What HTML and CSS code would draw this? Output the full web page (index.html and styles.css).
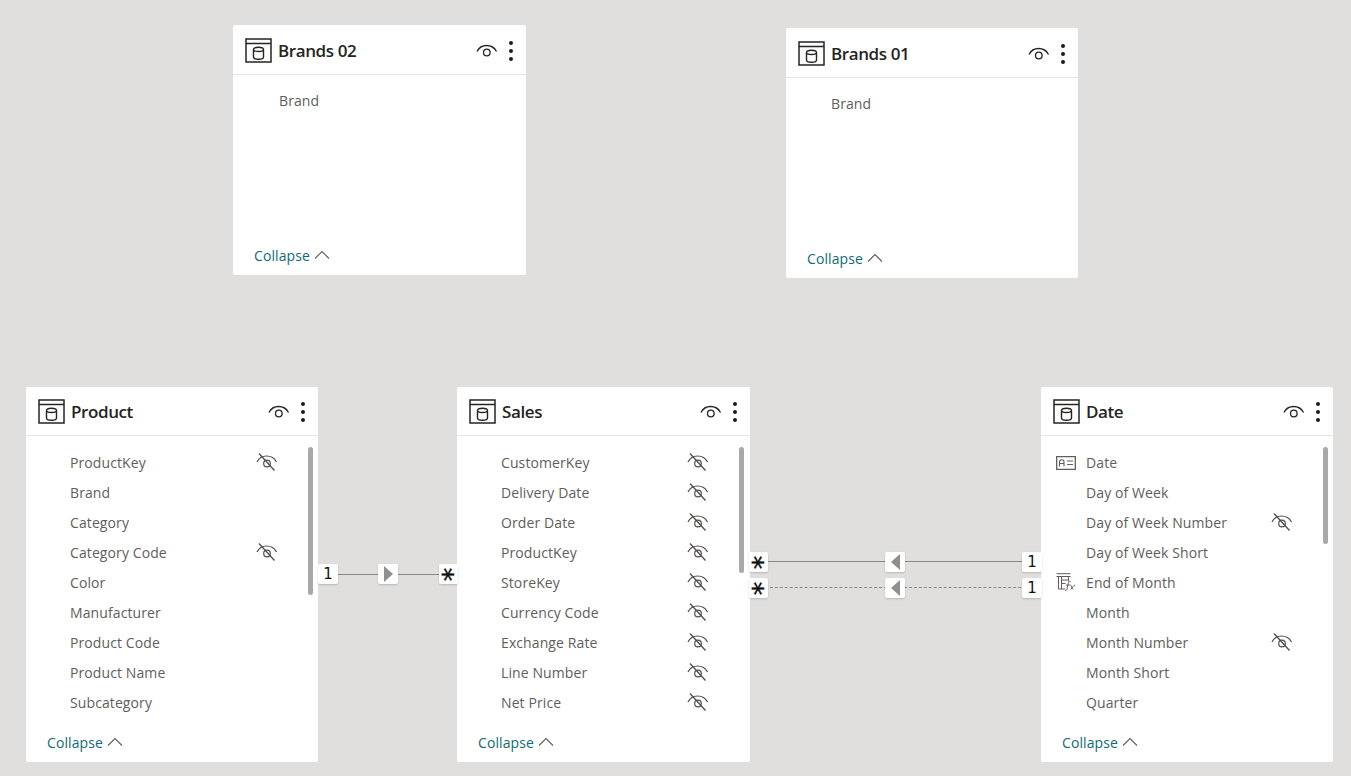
FILE: index.html
```html
<!DOCTYPE html>
<html lang="en">
<head>
<meta charset="utf-8">
<title>Model view</title>
<link rel="stylesheet" href="styles.css">
</head>
<body>
<svg class="defs" width="0" height="0" aria-hidden="true">
  <symbol id="tbl" viewBox="0 0 27 25">
    <path d="M1 1h25v23H1zM1 5.500h25" fill="none" stroke="#252423" stroke-width="1.500"/>
    <path d="M8.500 11.500c0-3 10-3 10 0v7.500c0 3-10 3-10 0zM8.500 11.500c0 2.600 10 2.600 10 0" fill="none" stroke="#252423" stroke-width="1.400"/>
  </symbol>
  <symbol id="eye" viewBox="0 0 22 14">
    <path d="M1 7.500C3 3.500 6.500 1.500 10.500 1.500S18.500 3.500 20.500 7.500" fill="none" stroke="#252423" stroke-width="1.300"/>
    <circle cx="10.800" cy="8.500" r="3.300" fill="none" stroke="#252423" stroke-width="1.300"/>
  </symbol>
  <symbol id="off" viewBox="0 0 22 20">
    <path d="M1 10C3 6 6.500 4 10.500 4S18.500 6 20.500 10" fill="none" stroke="#504e4c" stroke-width="1.200"/>
    <circle cx="11" cy="11.500" r="3.300" fill="none" stroke="#504e4c" stroke-width="1.200"/>
    <path d="M3 1.500 18.500 18.500" stroke="#504e4c" stroke-width="1.300"/>
  </symbol>
  <symbol id="idcard" viewBox="0 0 20 14">
    <path d="M.700.700h18.600v12.600H.700z" fill="none" stroke="#605e5c" stroke-width="1.300"/>
    <path d="M3.500 10.500V6c0-3 4.500-3 4.500 0v4.500M3.500 7.500H8M11 5h6M11 8.500h6" fill="none" stroke="#605e5c" stroke-width="1.100"/>
  </symbol>
  <symbol id="fx" viewBox="0 0 20 18">
    <path d="M.500.700h14M.500 3.500h14M2.500 3.500v12.500h6.500M5.500 3.500v12.500M12.500 3.500v5M5.500 7h7M5.500 10.500h4" fill="none" stroke="#605e5c"/>
    <path d="M9 17.500c2.200 0 2.200-1.500 2.700-5s1.500-4 3-4M10.200 12h4M14.500 12c1.200 0 1.200 4 2.800 4.500M19 12c-1 0-2.800 2.500-4.300 4.500" fill="none" stroke="#605e5c" stroke-width="1"/>
  </symbol>
</svg>

<main class="canvas">
  <section class="card card-brands2 card-short">
    <header class="card-head"><svg class="tbl-icon"><use href="#tbl"/></svg><h2 class="card-title">Brands 02</h2><svg class="eye-icon"><use href="#eye"/></svg><span class="kebab"><i></i><i></i><i></i></span></header>
    <ul class="fields"><li class="field">Brand</li></ul>
    <footer class="card-foot">Collapse <svg class="chev" viewBox="0 0 16 9"><path d="M1 8.500 8 1.500l7 7" /></svg></footer>
  </section>

  <section class="card card-brands1 card-short">
    <header class="card-head"><svg class="tbl-icon"><use href="#tbl"/></svg><h2 class="card-title">Brands 01</h2><svg class="eye-icon"><use href="#eye"/></svg><span class="kebab"><i></i><i></i><i></i></span></header>
    <ul class="fields"><li class="field">Brand</li></ul>
    <footer class="card-foot">Collapse <svg class="chev" viewBox="0 0 16 9"><path d="M1 8.500 8 1.500l7 7" /></svg></footer>
  </section>

  <section class="card card-product">
    <header class="card-head"><svg class="tbl-icon"><use href="#tbl"/></svg><h2 class="card-title">Product</h2><svg class="eye-icon"><use href="#eye"/></svg><span class="kebab"><i></i><i></i><i></i></span></header>
    <ul class="fields">
      <li class="field"><span class="name">ProductKey</span><svg class="off-icon"><use href="#off"/></svg></li>
      <li class="field"><span class="name">Brand</span></li>
      <li class="field"><span class="name">Category</span></li>
      <li class="field"><span class="name">Category Code</span><svg class="off-icon"><use href="#off"/></svg></li>
      <li class="field"><span class="name">Color</span></li>
      <li class="field"><span class="name">Manufacturer</span></li>
      <li class="field"><span class="name">Product Code</span></li>
      <li class="field"><span class="name">Product Name</span></li>
      <li class="field"><span class="name">Subcategory</span></li>
    </ul>
    <span class="thumb thumb-product"></span>
    <footer class="card-foot">Collapse <svg class="chev" viewBox="0 0 16 9"><path d="M1 8.500 8 1.500l7 7" /></svg></footer>
  </section>

  <section class="card card-sales">
    <header class="card-head"><svg class="tbl-icon"><use href="#tbl"/></svg><h2 class="card-title">Sales</h2><svg class="eye-icon"><use href="#eye"/></svg><span class="kebab"><i></i><i></i><i></i></span></header>
    <ul class="fields">
      <li class="field"><span class="name">CustomerKey</span><svg class="off-icon"><use href="#off"/></svg></li>
      <li class="field"><span class="name">Delivery Date</span><svg class="off-icon"><use href="#off"/></svg></li>
      <li class="field"><span class="name">Order Date</span><svg class="off-icon"><use href="#off"/></svg></li>
      <li class="field"><span class="name">ProductKey</span><svg class="off-icon"><use href="#off"/></svg></li>
      <li class="field"><span class="name">StoreKey</span><svg class="off-icon"><use href="#off"/></svg></li>
      <li class="field"><span class="name">Currency Code</span><svg class="off-icon"><use href="#off"/></svg></li>
      <li class="field"><span class="name">Exchange Rate</span><svg class="off-icon"><use href="#off"/></svg></li>
      <li class="field"><span class="name">Line Number</span><svg class="off-icon"><use href="#off"/></svg></li>
      <li class="field"><span class="name">Net Price</span><svg class="off-icon"><use href="#off"/></svg></li>
    </ul>
    <span class="thumb thumb-sales"></span>
    <footer class="card-foot">Collapse <svg class="chev" viewBox="0 0 16 9"><path d="M1 8.500 8 1.500l7 7" /></svg></footer>
  </section>

  <section class="card card-date">
    <header class="card-head"><svg class="tbl-icon"><use href="#tbl"/></svg><h2 class="card-title">Date</h2><svg class="eye-icon"><use href="#eye"/></svg><span class="kebab"><i></i><i></i><i></i></span></header>
    <ul class="fields">
      <li class="field"><svg class="type-icon"><use href="#idcard"/></svg><span class="name">Date</span></li>
      <li class="field"><span class="name">Day of Week</span></li>
      <li class="field"><span class="name">Day of Week Number</span><svg class="off-icon"><use href="#off"/></svg></li>
      <li class="field"><span class="name">Day of Week Short</span></li>
      <li class="field"><svg class="type-icon type-fx"><use href="#fx"/></svg><span class="name">End of Month</span></li>
      <li class="field"><span class="name">Month</span></li>
      <li class="field"><span class="name">Month Number</span><svg class="off-icon"><use href="#off"/></svg></li>
      <li class="field"><span class="name">Month Short</span></li>
      <li class="field"><span class="name">Quarter</span></li>
    </ul>
    <span class="thumb thumb-date"></span>
    <footer class="card-foot">Collapse <svg class="chev" viewBox="0 0 16 9"><path d="M1 8.500 8 1.500l7 7" /></svg></footer>
  </section>

  <div class="link link-a"></div>
  <div class="link link-b"></div>
  <div class="link link-c"></div>

  <span class="tag tag-one t1">1</span>
  <span class="tag tag-arrow t2"><i class="tri tri-right"></i></span>
  <span class="tag tag-star t3"><span class="star">*</span></span>
  <span class="tag tag-star t4"><span class="star">*</span></span>
  <span class="tag tag-arrow t5"><i class="tri tri-left"></i></span>
  <span class="tag tag-one t6">1</span>
  <span class="tag tag-star t7"><span class="star">*</span></span>
  <span class="tag tag-arrow t8"><i class="tri tri-left"></i></span>
  <span class="tag tag-one t9">1</span>
</main>
</body>
</html>
```

FILE: styles.css
```css
* { box-sizing: border-box; }
html, body { margin: 0; padding: 0; height: 100%; }
body {
  background: #e0dfdd;
  font-family: "Open Sans", "Noto Sans", sans-serif;
  overflow: hidden;
}
.defs { position: absolute; }
.canvas { position: relative; width: 1351px; height: 776px; overflow: hidden; }

.card {
  position: absolute;
  display: flex;
  flex-direction: column;
  background: #fff;
  border-radius: 2px;
  width: 292px;
  height: 375px;
}
.card-short { height: 250px; }
.card-brands2 { left: 233px; top: 25px; width: 293px; }
.card-brands1 { left: 786px; top: 28px; }
.card-product { left: 26px; top: 387px; }
.card-sales { left: 457px; top: 387px; width: 293px; }
.card-date { left: 1041px; top: 387px; }

.card-head {
  display: flex;
  align-items: center;
  height: 49px;
  padding: 1px 13px 0 12px;
  border-bottom: 1px solid #e6e5e4;
  flex: none;
}
.card-short .card-head { height: 50px; padding-top: 2px; }
.tbl-icon { width: 27px; height: 25px; flex: none; }
.card-title {
  flex: 1;
  margin: 0 0 0 6px;
  font-size: 17px;
  font-weight: 600;
  color: #252423;
  letter-spacing: -.4px;
}
.eye-icon { width: 22px; height: 14px; margin-top: 1px; flex: none; }
.kebab {
  display: flex;
  flex-direction: column;
  gap: 4px;
  width: 4px;
  margin-left: 11px;
  flex: none;
}
.kebab i { width: 4px; height: 4px; border-radius: 50%; background: #1b1a19; }

.fields {
  list-style: none;
  margin: 0;
  padding: 11px 0 0;
  flex: 1;
}
.card-short .fields { padding-top: 10px; }
.field {
  position: relative;
  height: 30px;
  display: flex;
  align-items: center;
  padding-left: 44px;
  font-size: 14px;
  letter-spacing: .1px;
  color: #605e5c;
}
.card-short .field, .card-date .field { padding-left: 45px; }
.card-brands2 .field { padding-left: 46px; }
.name { flex: none; }
.off-icon {
  position: absolute;
  left: 230px;
  top: 5px;
  width: 22px;
  height: 20px;
}
.type-icon {
  position: absolute;
  left: 15px;
  top: 9px;
  width: 20px;
  height: 14px;
}
.type-fx { height: 18px; top: 6px; }

.thumb {
  position: absolute;
  top: 60px;
  width: 5px;
  border-radius: 3px;
  background: #a9a9a9;
}
.thumb-product { left: 282px; height: 148px; }
.thumb-sales { left: 282px; height: 126px; }
.thumb-date { left: 282px; height: 97px; }

.card-foot {
  display: flex;
  align-items: center;
  gap: 4px;
  height: 40px;
  padding: 0 0 0 21px;
  font-size: 14px;
  letter-spacing: .1px;
  color: #0f6b78;
  flex: none;
}
.chev { width: 16px; height: 9px; margin-top: -2px; }
.chev path { fill: none; stroke: #605e5c; stroke-width: 1.1; }

.link { position: absolute; height: 0; border-top: 1px solid #8a8886; }
.link-a { left: 318px; width: 139px; top: 574px; }
.link-b { left: 750px; width: 291px; top: 561px; border-top-width: 1.5px; }
.link-c { left: 750px; width: 291px; top: 587px; border-top: 1px dashed #8a8886; }

.tag {
  position: absolute;
  display: flex;
  align-items: center;
  justify-content: center;
  height: 20px;
  background: #fff;
  border-radius: 2px;
  box-shadow: 0 1px 2px rgba(0, 0, 0, .18);
  color: #111;
  line-height: 1;
  font-family: "DejaVu Sans", sans-serif;
}
.tag-one { width: 20px; font-size: 15px; }
.tag-star { width: 19px; }
.star {
  display: block;
  font-size: 27px;
  -webkit-text-stroke: .4px #111;
  transform: translateX(-.2em) rotate(90deg);
}
.tag-arrow { width: 20px; }
.tri { width: 0; height: 0; border-top: 8px solid transparent; border-bottom: 8px solid transparent; }
.tri-right { border-left: 9px solid #8f8f8f; }
.tri-left { border-right: 9px solid #8f8f8f; }

.t1 { left: 318px; top: 564px; }
.t2 { left: 378px; top: 564px; }
.t3 { left: 439px; top: 564px; }
.t4 { left: 749px; top: 552px; }
.t5 { left: 885px; top: 552px; }
.t6 { left: 1022px; top: 552px; }
.t7 { left: 749px; top: 578px; }
.t8 { left: 885px; top: 578px; }
.t9 { left: 1022px; top: 578px; }
```
